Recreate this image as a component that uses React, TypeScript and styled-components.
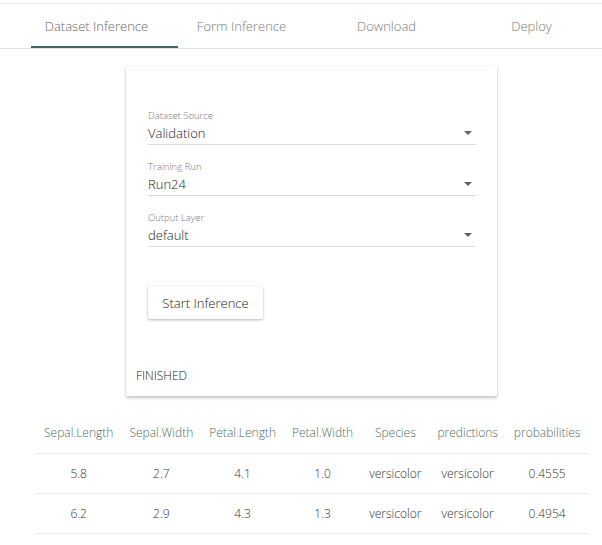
import React from "react";
import styled, { createGlobalStyle } from "styled-components";

const Global = createGlobalStyle`
  html, body { margin: 0; padding: 0; background: #fff; }
  body { font-family: "Open Sans", "Liberation Sans", sans-serif; font-weight: 300; color: #333; }
  * { box-sizing: border-box; }
`;

const Page = styled.div`
  width: 602px;
  padding-top: 3px;
`;

const TabBar = styled.div`
  position: relative;
  display: flex;
  height: 46px;
  padding-left: 24px;
  border-top: 1px solid #e6e6e6;
  border-bottom: 1px solid #e3e3e3;
  overflow: hidden;
`;

const Tab = styled.div<{ $active?: boolean }>`
  flex: 0 0 145px;
  text-align: center;
  line-height: 44px;
  font-size: 13px;
  font-weight: 300;
  color: ${(p) => (p.$active ? "#666" : "#7a7a7a")};
  white-space: nowrap;
`;

const Indicator = styled.div`
  position: absolute;
  left: 31px;
  width: 147px;
  bottom: 0;
  height: 2px;
  background: #3f6b60;
`;

const Card = styled.div`
  margin: 17px 0 0 126px;
  width: 371px;
  background: #fff;
  box-shadow: 0 2px 3px rgba(0, 0, 0, 0.22), 0 0 2px rgba(0, 0, 0, 0.08);
  padding: 44px 10px 12px 10px;
  display: flex;
  flex-direction: column;
`;

const Form = styled.div`
  padding: 0 11px 0 12px;
  display: flex;
  flex-direction: column;
  gap: 16px;
`;

const Field = styled.div`
  display: flex;
  flex-direction: column;
  border-bottom: 1px solid #dcdcdc;
  padding-bottom: 1px;
`;

const Label = styled.div`
  font-size: 9.5px;
  line-height: 12px;
  font-weight: 300;
  color: #777;
`;

const ValueRow = styled.div`
  display: flex;
  align-items: center;
  justify-content: space-between;
  margin-top: 1px;
  height: 20px;
  font-size: 13px;
  font-weight: 300;
  color: #222;
`;

const Caret = styled.span`
  width: 0;
  height: 0;
  margin-right: 4px;
  border-left: 4.5px solid transparent;
  border-right: 4.5px solid transparent;
  border-top: 4.5px solid #5e6664;
`;

const Button = styled.button`
  align-self: flex-start;
  margin: 39px 0 0 12px;
  width: 115px;
  height: 33px;
  border: none;
  border-radius: 2px;
  background: #fff;
  font-family: inherit;
  font-size: 13px;
  font-weight: 300;
  color: #222;
  box-shadow: 0 1px 3px rgba(0, 0, 0, 0.28), 0 0 1px rgba(0, 0, 0, 0.1);
  padding: 0;
`;

const Status = styled.div`
  margin-top: 49px;
  font-size: 12px;
  line-height: 16px;
  font-weight: 300;
  color: #222;
`;

const Table = styled.table`
  margin: 17px 0 0 36px;
  border-collapse: collapse;
  font-size: 12px;
  font-weight: 300;
`;

const Th = styled.th`
  font-weight: 300;
  color: #4f6e66;
  height: 40px;
  padding: 0 8px;
  text-align: center;
  white-space: nowrap;
  border-bottom: 1px solid #ebebeb;
`;

const Td = styled.td`
  color: #333;
  height: 40px;
  padding: 0 8px;
  text-align: center;
  border-bottom: 1px solid #ebebeb;
`;

const tabs = ["Dataset Inference", "Form Inference", "Download", "Deploy"];
const fields = [
  { label: "Dataset Source", value: "Validation" },
  { label: "Training Run", value: "Run24" },
  { label: "Output Layer", value: "default" },
];
const cols = [
  "Sepal.Length",
  "Sepal.Width",
  "Petal.Length",
  "Petal.Width",
  "Species",
  "predictions",
  "probabilities",
];
const rows = [
  ["5.8", "2.7", "4.1", "1.0", "versicolor", "versicolor", "0.4555"],
  ["6.2", "2.9", "4.3", "1.3", "versicolor", "versicolor", "0.4954"],
];

export default function App() {
  return (
    <Page>
      <Global />
      <TabBar>
        {tabs.map((t, i) => (
          <Tab key={t} $active={i === 0}>
            {t}
          </Tab>
        ))}
        <Indicator />
      </TabBar>
      <Card>
        <Form>
          {fields.map((f) => (
            <Field key={f.label}>
              <Label>{f.label}</Label>
              <ValueRow>
                <span>{f.value}</span>
                <Caret />
              </ValueRow>
            </Field>
          ))}
        </Form>
        <Button>Start Inference</Button>
        <Status>FINISHED</Status>
      </Card>
      <Table>
        <thead>
          <tr>
            {cols.map((c) => (
              <Th key={c}>{c}</Th>
            ))}
          </tr>
        </thead>
        <tbody>
          {rows.map((r, i) => (
            <tr key={i}>
              {r.map((v, j) => (
                <Td key={j}>{v}</Td>
              ))}
            </tr>
          ))}
        </tbody>
      </Table>
    </Page>
  );
}
